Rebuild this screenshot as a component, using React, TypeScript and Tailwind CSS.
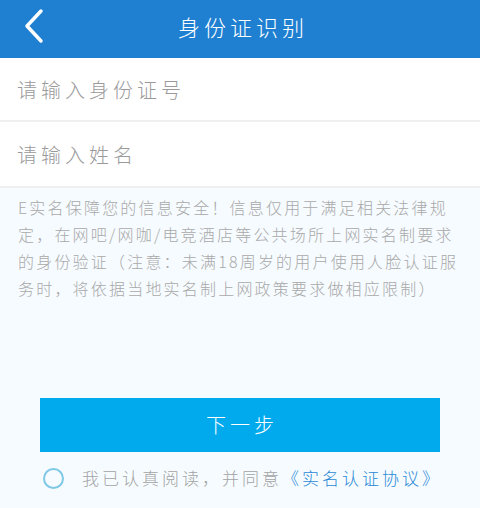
const cjk = "font-['Noto_Sans_CJK_SC','Noto_Sans',sans-serif]";

function BackIcon() {
  return (
    <svg width="24" height="36" viewBox="0 0 24 36" fill="none">
      <path d="M19 3 L5 18 L19 33" stroke="white" strokeWidth="3.5" strokeLinecap="round" strokeLinejoin="round" />
    </svg>
  );
}

export default function App() {
  const notice = [
    'E实名保障您的信息安全！信息仅用于满足相关法律规',
    '定，在网吧/网咖/电竞酒店等公共场所上网实名制要求',
    '的身份验证（注意：未满18周岁的用户使用人脸认证服',
    '务时，将依据当地实名制上网政策要求做相应限制）',
  ];

  return (
    <div className={`w-[480px] h-[508px] bg-[#f6fbff] flex flex-col ${cjk}`}>
      <div className="h-[58px] bg-[#1f7fd1] flex items-center relative shrink-0 pb-[6px]">
        <div className="absolute left-[22px] top-[8px]">
          <BackIcon />
        </div>
        <div className="flex-1 text-center text-white text-[22px] tracking-[4px] pl-[6px] font-light">身份证识别</div>
      </div>

      <div className="bg-white">
        <div className="h-[64px] flex items-center pl-[17px] pt-[2px] border-b-2 border-[#efefef]">
          <span className="text-[20px] tracking-[4px] text-[#9a9a9a] font-light">请输入身份证号</span>
        </div>
        <div className="h-[66px] flex items-center pl-[17px] pt-[2px] border-b-2 border-[#efefef]">
          <span className="text-[20px] tracking-[4px] text-[#9a9a9a] font-light">请输入姓名</span>
        </div>
      </div>

      <div className="px-[18px] pt-[6px] text-[16px] leading-[27px] tracking-[2.2px] text-[#a9a9a9] font-light">
        {notice.map((line) => (
          <div key={line} className="whitespace-nowrap">{line}</div>
        ))}
      </div>

      <div className="flex-1" />

      <div className="px-[40px]">
        <button className="w-full h-[54px] bg-[#00aaec] text-white text-[20px] tracking-[4px] pl-[4px] font-light">下一步</button>
      </div>

      <div className="h-[56px] flex items-center pl-[43px] pb-[4px]">
        <span className="w-[21px] h-[21px] rounded-full border-2 border-[#7fc8e6] shrink-0" />
        <span className="ml-[18px] text-[17px] tracking-[3px] text-[#a3a3a3] font-light whitespace-nowrap">
          我已认真阅读，并同意<span className="text-[#2a8ad6]">《实名认证协议》</span>
        </span>
      </div>
    </div>
  );
}
